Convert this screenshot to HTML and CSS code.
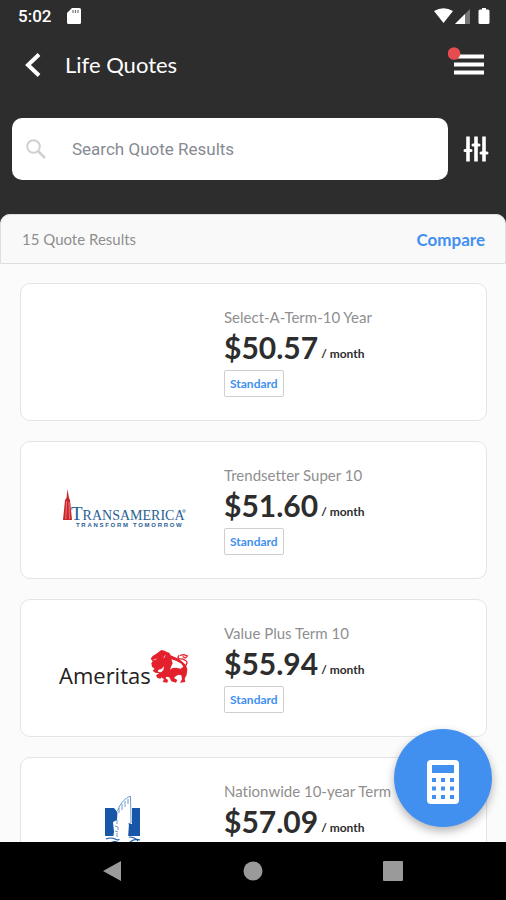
FILE: index.html
```html
<!DOCTYPE html>
<html lang="en">
<head>
<meta charset="utf-8">
<meta name="viewport" content="width=device-width, initial-scale=1">
<title>Life Quotes</title>
<link rel="stylesheet" href="styles.css">
</head>
<body>
<header class="top">
  <div class="status">
    <span class="clock">5:02</span>
    <svg class="sd" width="14" height="16" viewBox="0 0 14 16" aria-hidden="true"><path fill="#fff" d="M5 0h7.500q1.500 0 1.500 1.500v13q0 1.500-1.500 1.500h-11Q0 16 0 14.500V5z"/><path stroke="#777" stroke-width="1.200" d="M6 2v3M8.500 2v3M11 2v3"/></svg>
    <svg class="signals" width="58" height="18" viewBox="0 0 58 18" aria-hidden="true">
      <path fill="#fff" d="M0 4Q9.500-1.500 19 4L9.500 16z"/>
      <path fill="#777" d="M36 2v15H21z"/><path fill="#fff" d="M31 7v10H21z"/>
      <path fill="#fff" d="M48 1h4v1.500h2q1.500 0 1.500 1.500v11.500q0 1.500-1.500 1.500h-8q-1.500 0-1.500-1.500V4q0-1.500 1.500-1.500h2z"/>
    </svg>
  </div>
  <div class="titlebar">
    <button class="icon-btn" aria-label="Back"><svg width="16" height="24" viewBox="0 0 16 24"><path fill="none" stroke="#fff" stroke-width="4" d="M14 1.500 3 12l11 10.500"/></svg></button>
    <h1>Life Quotes</h1>
    <button class="icon-btn menu" aria-label="Menu"><svg width="36" height="28" viewBox="0 0 36 28"><path fill="#fff" d="M6 7.500h30v4H6zM6 15.500h30v4H6zM6 23.500h30v4H6z"/><circle cx="6" cy="6.500" r="6.300" fill="#e54b4f"/></svg></button>
  </div>
  <div class="searchrow">
    <label class="search">
      <svg width="20" height="20" viewBox="0 0 20 20" aria-hidden="true"><circle cx="7.500" cy="7.500" r="6.300" fill="none" stroke="#d0d0d0" stroke-width="2"/><path stroke="#d0d0d0" stroke-width="2.500" d="m12 12 7 7"/></svg>
      <input type="text" placeholder="Search Quote Results" aria-label="Search Quote Results">
    </label>
    <button class="icon-btn" aria-label="Filters"><svg width="26" height="26" viewBox="0 0 26 26"><path fill="none" stroke="#fff" stroke-width="3.600" d="M5 .5v25M13 .5v25M21 .5v25"/><path fill="none" stroke="#fff" stroke-width="3" stroke-linecap="round" d="M2 14.500h6M10 9h6M18 17h6"/></svg></button>
  </div>
</header>
<main class="results">
  <div class="summary"><span>15 Quote Results</span><a href="#compare">Compare</a></div>
  <div class="list">
    <article class="card">
      <div class="logo"></div>
      <div class="quote">
        <h2>Select-A-Term-10 Year</h2>
        <p class="price"><strong>$50.57</strong> <span>/ month</span></p>
        <span class="tag">Standard</span>
      </div>
    </article>
    <article class="card">
      <div class="logo">
        <svg width="124" height="42" viewBox="0 0 124 42" role="img" aria-label="Transamerica">
          <path fill="#c9242c" d="M5.500 0 7 9l1 2 2 20H1l2-20 1.500-2z"/><path stroke="#f0a0a0" stroke-width=".7" d="M4.500 12 3.800 30M7 13l.5 17"/>
          <g fill="#285e94" font-family="Liberation Serif, serif"><text x="9" y="31"><tspan font-size="19">T</tspan><tspan font-size="14">RANSAMERICA</tspan></text></g>
          <circle cx="122" cy="22" r="1.300" fill="none" stroke="#285e94" stroke-width=".6"/>
          <text x="14" y="38" font-family="Liberation Sans, sans-serif" font-weight="700" font-size="6" letter-spacing="1.700" fill="#285e94">TRANSFORM TOMORROW</text>
        </svg>
      </div>
      <div class="quote">
        <h2>Trendsetter Super 10</h2>
        <p class="price"><strong>$51.60</strong> <span>/ month</span></p>
        <span class="tag">Standard</span>
      </div>
    </article>
    <article class="card">
      <div class="logo">
        <svg width="130" height="40" viewBox="0 0 130 40" role="img" aria-label="Ameritas">
          <text x="0" y="36" font-family="Open Sans, sans-serif" font-size="22" fill="#222">Ameritas</text>
          <g transform="translate(87 -4) scale(.3333)">
            <path fill="#e3202b" d="M14 44 20 36 30 30 38 24 46 18 56 20 62 24 70 26 74 34 84 38 98 44 110 54 120 64 124 76 122 92 116 104 118 114 102 116 108 106 106 94 98 92 90 96 84 102 94 108 90 116 76 112 70 100 62 98 58 102 66 108 64 116 50 114 54 106 46 100 44 104 34 102 30 94 40 88 28 86 20 80 26 74 18 68 16 58 20 52z"/>
            <path fill="#fff" d="M76 46 90 50 106 59 112 68 104 74 90 71 80 72 72 77 76 66 80 58zM36 78l10-3 8-8-2 12-7 6-8-1z"/>
            <path fill="none" stroke="#e3202b" stroke-width="4" d="M116 68Q128 56 120 50T98 44Q94 38 100 34M102 34l12-2 10 4-6 6-8-4"/>
            <path fill="none" stroke="#fff" stroke-width="2" d="M22 48l10-3M58 34 53 42"/>
          </g>
        </svg>
      </div>
      <div class="quote">
        <h2>Value Plus Term 10</h2>
        <p class="price"><strong>$55.94</strong> <span>/ month</span></p>
        <span class="tag">Standard</span>
      </div>
    </article>
    <article class="card">
      <div class="logo">
        <svg width="38" height="60" viewBox="0 0 38 60" role="img" aria-label="Nationwide">
          <path fill="#1857a8" d="M0 12h9l5 6v22H0zM27 12h8v28H22V28h5z"/>
          <path fill="#fff" d="M25.500 0Q16 4 12.500 15L12 24l-4 2 1 10-1 6h15l1-14 2-1z"/>
          <path fill="none" stroke="#5d8cc6" stroke-width=".9" d="M12.500 15Q16 4 25.500 0L26 27l-3 1"/>
          <path fill="none" stroke="#6f9bcf" d="M23 3v5M20 5v6M17 8v6M14 12v5M12 24v4M10 30l3 1M13 31v3M10 35l3 1M12 37v4"/>
          <path fill="none" stroke="#1857a8" stroke-width="1.200" d="M1 43q5-2 9 0t4 0M5 47q6-3 10 1M24 41q6 0 9 4M25 46q5-4 10-2"/>
        </svg>
      </div>
      <div class="quote">
        <h2>Nationwide 10-year Term</h2>
        <p class="price"><strong>$57.09</strong> <span>/ month</span></p>
        <span class="tag">Standard</span>
      </div>
    </article>
  </div>
  <button class="fab" aria-label="Calculator"><svg width="32" height="44" viewBox="0 0 32 44"><rect width="32" height="44" rx="4" fill="#fff"/><path fill="#4190ef" d="M5 5h22v8H5zM5 18h4v4H5zM14 18h4v4h-4zM23 18h4v4h-4zM5 26.500h4v4H5zM14 26.500h4v4h-4zM23 26.500h4v4h-4zM5 35h4v4H5zM14 35h4v4h-4zM23 35h4v4h-4z"/></svg></button>
</main>
<nav class="navbar" aria-label="System">
  <button class="icon-btn" aria-label="Back"><svg width="20" height="20" viewBox="0 0 20 20"><path fill="#9a9a9a" d="M18 0v20L0 10z"/></svg></button>
  <button class="icon-btn" aria-label="Home"><svg width="20" height="20" viewBox="0 0 20 20"><circle cx="10" cy="10" r="9.500" fill="#9a9a9a"/></svg></button>
  <button class="icon-btn" aria-label="Recent apps"><svg width="20" height="20" viewBox="0 0 20 20"><rect width="20" height="20" rx="1" fill="#9a9a9a"/></svg></button>
</nav>
</body>
</html>
```
FILE: styles.css
```css
* { box-sizing: border-box; }
body {
  margin: 0;
  height: 100vh;
  display: flex;
  flex-direction: column;
  background: #2d2d2d;
  font-family: Lato, sans-serif;
  font-variant-ligatures: none;
  overflow: hidden;
}
h1, h2, p { margin: 0; font-weight: 400; }
svg { display: block; }
.icon-btn { border: 0; padding: 0; background: none; }

.top { flex: none; color: #fff; }
.status {
  display: flex;
  align-items: center;
  height: 32px;
  padding: 0 14px 0 18px;
}
.clock { font: 500 17px/32px Roboto, sans-serif; }
.sd { margin-left: 16px; }
.signals { margin-left: auto; }
.titlebar {
  display: flex;
  align-items: center;
  height: 66px;
  padding: 0 22px 0 25px;
}
.titlebar h1 { margin-left: 24px; font-size: 22px; line-height: 28px; }
.menu { margin: 0 0 8px auto; }
.searchrow {
  display: flex;
  align-items: center;
  gap: 15px;
  padding: 20px 17px 34px 12px;
}
.search {
  flex: 1;
  display: flex;
  align-items: center;
  gap: 26px;
  height: 62px;
  padding: 0 14px;
  border-radius: 10px;
  background: #fff;
}
.search input {
  flex: 1;
  min-width: 0;
  border: 0;
  padding: 0;
  outline: 0;
  background: none;
  font: 17px/24px Roboto, sans-serif;
}
.search input::placeholder { color: #868b92; opacity: 1; }

.results {
  flex: 1;
  min-height: 0;
  position: relative;
  overflow: hidden;
  border-radius: 10px 10px 0 0;
  background: #fbfbfb;
}
.summary {
  display: flex;
  align-items: center;
  justify-content: space-between;
  height: 50px;
  padding: 0 20px 0 21px;
  border: 1px solid #dedede;
  border-radius: 10px 10px 0 0;
  background: #f9f9f9;
  color: #8f8f8f;
  font-size: 15px;
}
.summary a { color: #4190ef; font-size: 17px; font-weight: 700; text-decoration: none; }
.list {
  display: flex;
  flex-direction: column;
  gap: 20px;
  padding: 19px 19px 20px 20px;
}
.card {
  flex: none;
  display: grid;
  grid-template-columns: 203px 1fr;
  height: 138px;
  border: 1px solid #e4e4e4;
  border-radius: 10px;
  background: #fff;
}
.logo { display: flex; align-items: center; justify-content: center; padding-left: 2px; }
.quote { padding-top: 23px; }
.quote h2 { color: #8f8f8f; font-size: 15px; line-height: 20px; white-space: nowrap; }
.price {
  display: flex;
  align-items: flex-end;
  gap: 3px;
  margin-top: 2px;
  color: #2d2d2d;
  white-space: nowrap;
}
.price strong { font-size: 30px; font-weight: 700; line-height: 36px; }
.price span { font-size: 12px; font-weight: 700; line-height: 22px; }
.tag {
  display: block;
  width: fit-content;
  margin-top: 5px;
  padding: 0 5px;
  border: 1px solid #cfcfcf;
  border-radius: 2px;
  color: #4190ef;
  font-size: 12px;
  font-weight: 700;
  line-height: 25px;
}
.fab {
  position: absolute;
  right: 14px;
  bottom: 15px;
  width: 98px;
  height: 98px;
  display: grid;
  place-items: center;
  border: 0;
  border-radius: 50%;
  padding: 8px 0 0;
  background: #4190ef;
  box-shadow: 0 4px 10px rgba(0, 0, 0, .3);
}
.navbar {
  flex: none;
  display: flex;
  align-items: center;
  justify-content: center;
  gap: 120px;
  height: 58px;
  background: #000;
}
```
